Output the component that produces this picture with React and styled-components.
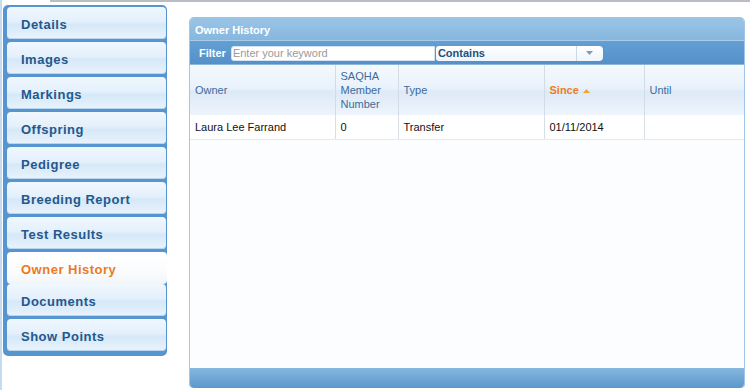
import React from "react";
import styled, { createGlobalStyle } from "styled-components";

const GlobalStyle = createGlobalStyle`
  body {
    margin: 0;
    background: #ffffff;
    font-family: "Liberation Sans", Arial, sans-serif;
  }
`;

const Page = styled.div`
  width: 750px;
  height: 390px;
  box-sizing: border-box;
  border-left: 2px solid #c4dbf1;
  display: flex;
  flex-direction: column;
  overflow: hidden;
`;

const TopLine = styled.div`
  height: 2px;
  margin-left: 48px;
  background: #b9bec4;
`;

const Content = styled.div`
  display: flex;
  align-items: flex-start;
  flex: 1;
`;

const Sidebar = styled.div`
  width: 164px;
  margin: 3px 0 0 1px;
  box-sizing: border-box;
  padding: 2px 1px 5px 4px;
  background: #5795d0;
  border-radius: 5px;
  display: flex;
  flex-direction: column;
`;

const Tab = styled.div`
  height: 32px;
  box-sizing: border-box;
  padding: 2px 0 0 14px;
  margin-bottom: ${(p) => (p.active ? "0" : "3px")};
  margin-right: ${(p) => (p.active ? "-1px" : "0")};
  display: flex;
  align-items: center;
  border-radius: 4px;
  font-size: 13px;
  font-weight: bold;
  letter-spacing: 0.5px;
  color: ${(p) => (p.active ? "#ec7a22" : "#24588c")};
  background: ${(p) =>
    p.active
      ? "linear-gradient(#ffffff, #fbfcfe 60%, #f1f5f9)"
      : "linear-gradient(#f0f7fe, #e4f0fb 45%, #d6e8f8 55%, #e9f3fc)"};
  box-shadow: ${(p) => (p.active ? "none" : "inset 0 -1px 0 #b9d4ee")};
  &:last-child {
    margin-bottom: 0;
  }
`;

const Panel = styled.div`
  width: 556px;
  height: 371px;
  margin: 15px 0 0 22px;
  box-sizing: border-box;
  border: 1px solid #a3c5e6;
  border-top: none;
  border-bottom: none;
  border-radius: 5px 5px 4px 4px;
  background: #fbfdfe;
  display: flex;
  flex-direction: column;
  overflow: hidden;
`;

const PanelHeader = styled.div`
  height: 24px;
  box-sizing: border-box;
  padding: 2px 0 0 5px;
  display: flex;
  align-items: center;
  background: linear-gradient(#9bc5e6, #86b7df);
  border-bottom: 1px solid #a9cbe8;
  color: #ffffff;
  font-size: 11px;
  font-weight: bold;
`;

const FilterBar = styled.div`
  height: 22px;
  display: flex;
  align-items: center;
  padding: 1px 0 0 9px;
  gap: 4px;
  background: linear-gradient(#629fd3, #5591c9);
  border-bottom: 1px solid #8db6dc;
`;

const FilterLabel = styled.span`
  color: #ffffff;
  font-size: 11px;
  font-weight: bold;
  margin-right: 1px;
`;

const Input = styled.div`
  width: 204px;
  height: 15px;
  box-sizing: border-box;
  background: #ffffff;
  border-radius: 3px 0 0 3px;
  border: 1px solid #d3e3f2;
  display: flex;
  align-items: center;
  padding-left: 1px;
  font-size: 11px;
  color: #9a9a9a;
`;

const Select = styled.div`
  width: 167px;
  height: 15px;
  margin-left: -3px;
  box-sizing: border-box;
  background: linear-gradient(#ffffff, #eef5fc);
  border-radius: 3px 4px 4px 3px;
  display: flex;
  align-items: center;
  font-size: 11px;
  font-weight: bold;
  color: #24507c;
`;

const SelectText = styled.span`
  flex: 1;
  padding-left: 2px;
`;

const SelectArrow = styled.span`
  width: 26px;
  height: 100%;
  border-left: 1px solid #c8d8e8;
  display: flex;
  align-items: center;
  justify-content: center;
`;

const Table = styled.table`
  border-collapse: collapse;
  width: 100%;
  table-layout: fixed;
  font-size: 11px;
`;

const HeadCell = styled.th`
  width: ${(p) => p.w}px;
  height: 50px;
  box-sizing: border-box;
  padding: 0 5px;
  text-align: left;
  font-weight: ${(p) => (p.sorted ? "bold" : "normal")};
  color: ${(p) => (p.sorted ? "#ef7d1e" : "#3d6b9b")};
  line-height: 14px;
  background: linear-gradient(#f5f9fe, #e8f1fb 48%, #dde9f7 52%, #edf4fc);
  border-right: 1px solid #d2dce6;
  &:last-child {
    border-right: none;
  }
`;

const SortIcon = styled.svg`
  margin-left: 4px;
  vertical-align: middle;
`;

const Cell = styled.td`
  height: 23px;
  padding: 0 5px 1px;
  color: #111111;
  background: #ffffff;
  border-right: 1px solid #d8dee4;
  border-bottom: 1px solid #e6ebf0;
  &:last-child {
    border-right: none;
  }
`;

const Spacer = styled.div`
  flex: 1;
`;

const Footer = styled.div`
  height: 20px;
  background: linear-gradient(#86b7df, #5b98cc);
  border-radius: 0 0 4px 4px;
`;

const tabs = [
  "Details",
  "Images",
  "Markings",
  "Offspring",
  "Pedigree",
  "Breeding Report",
  "Test Results",
  "Owner History",
  "Documents",
  "Show Points",
];

const columns = [
  { label: "Owner", w: 145 },
  { label: "SAQHA Member Number", w: 63 },
  { label: "Type", w: 146 },
  { label: "Since", w: 100, sorted: true },
  { label: "Until", w: 100 },
];

const rows = [["Laura Lee Farrand", "0", "Transfer", "01/11/2014", ""]];

export default function App() {
  return (
    <>
      <GlobalStyle />
      <Page>
        <TopLine />
        <Content>
          <Sidebar>
            {tabs.map((t) => (
              <Tab key={t} active={t === "Owner History"}>
                {t}
              </Tab>
            ))}
          </Sidebar>
          <Panel>
            <PanelHeader>Owner History</PanelHeader>
            <FilterBar>
              <FilterLabel>Filter</FilterLabel>
              <Input>Enter your keyword</Input>
              <Select>
                <SelectText>Contains</SelectText>
                <SelectArrow>
                  <svg width="7" height="4" viewBox="0 0 7 4">
                    <path d="M0 0h7L3.5 4z" fill="#7d9cbc" />
                  </svg>
                </SelectArrow>
              </Select>
            </FilterBar>
            <Table>
              <thead>
                <tr>
                  {columns.map((c) => (
                    <HeadCell key={c.label} w={c.w} sorted={c.sorted}>
                      {c.label}
                      {c.sorted && (
                        <SortIcon width="7" height="4" viewBox="0 0 7 4">
                          <path d="M0 4h7L3.5 0z" fill="#f6a623" />
                        </SortIcon>
                      )}
                    </HeadCell>
                  ))}
                </tr>
              </thead>
              <tbody>
                {rows.map((r, i) => (
                  <tr key={i}>
                    {r.map((v, j) => (
                      <Cell key={j}>{v}</Cell>
                    ))}
                  </tr>
                ))}
              </tbody>
            </Table>
            <Spacer />
            <Footer />
          </Panel>
        </Content>
      </Page>
    </>
  );
}
